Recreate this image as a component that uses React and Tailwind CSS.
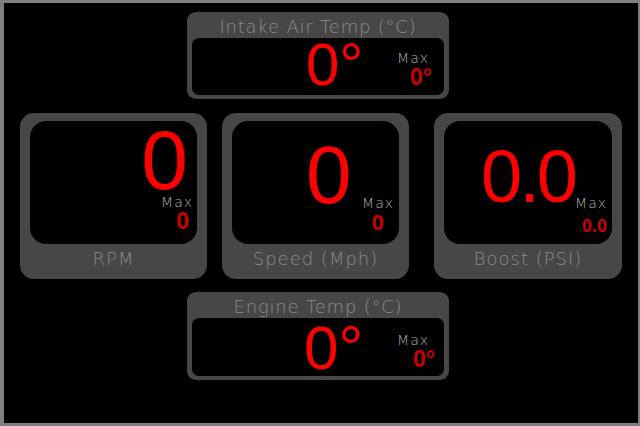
import React from "react";

const T = "font-['DejaVu_Sans',sans-serif] font-extralight";
const N = "font-['Liberation_Sans',sans-serif]";

function Max({ className = "" }) {
  return (
    <div className={`${T} text-[14px] leading-[10px] tracking-[1px] text-[#b0b0b0] ${className}`}>Max</div>
  );
}

function Val({ children, className = "" }) {
  return (
    <div className={`${N} font-bold text-[#cc0000] ${className}`}>{children}</div>
  );
}

function WideCard({ title, children, panelH }) {
  return (
    <div className="ml-[183px] w-[262px] rounded-[9px] bg-[#474747] px-[5px] pb-[4px] flex flex-col">
      <div className={`${T} text-center text-[18px] leading-[13px] tracking-[0.8px] text-[#8c8c8c] mt-[8px] mb-[5px]`}>{title}</div>
      <div className={`${panelH} rounded-[7px] bg-black flex`}>{children}</div>
    </div>
  );
}

function Gauge({ label, children, w = "w-[187px]", className = "" }) {
  return (
    <div className={`${w} h-[166px] rounded-[14px] bg-[#474747] px-[10px] pt-[8px] flex flex-col ${className}`}>
      <div className="h-[123px] rounded-[16px] bg-black flex">{children}</div>
      <div className={`${T} text-center text-[18px] leading-[13px] tracking-[1px] text-[#8c8c8c] mt-[8px]`}>{label}</div>
    </div>
  );
}

export default function App() {
  return (
    <div className="w-[640px] h-[426px] bg-black border-l-[4px] border-t-[3px] border-r-[2px] border-b-[3px] border-[#7f7f7f] flex flex-col pt-[9px] overflow-hidden">
      <WideCard title="Intake Air Temp (°C)" panelH="h-[57px]">
        <div className={`${N} text-[60px] leading-[43px] text-[#ff0000] ml-[114px] mt-[5px]`}>0°</div>
        <div className="ml-auto mr-[12px] flex flex-col items-end">
          <Max className="mt-[15px] mr-[3px]" />
          <Val className="text-[23px] leading-[17px] mt-[6px]">0°</Val>
        </div>
      </WideCard>

      <div className="flex mt-[14px] ml-[16px]">
        <Gauge label="RPM">
          <div className="flex flex-col items-end w-full">
            <div className={`${N} text-[84px] leading-[60px] text-[#ff0000] mt-[9px] mr-[9px]`}>0</div>
            <Max className="mt-[7px] mr-[4px]" />
            <Val className="text-[23px] leading-[17px] mt-[6px] mr-[8px]">0</Val>
          </div>
        </Gauge>
        <Gauge label="Speed (Mph)" className="ml-[15px]">
          <div className={`${N} text-[82px] leading-[59px] text-[#ff0000] ml-[74px] mt-[24px]`}>0</div>
          <div className="ml-auto mr-[5px] flex flex-col items-end">
            <Max className="mt-[77px]" />
            <Val className="text-[22px] leading-[16px] mt-[7px] mr-[10px]">0</Val>
          </div>
        </Gauge>
        <Gauge label="Boost (PSI)" w="w-[188px]" className="ml-[25px]">
          <div className={`${N} text-[74px] leading-[53px] tracking-[-3px] text-[#ff0000] ml-[37px] mt-[29px]`}>0.0</div>
          <div className="ml-auto mr-[5px] flex flex-col items-end">
            <Max className="mt-[77px]" />
            <Val className="text-[18px] leading-[13px] mt-[12px]">0.0</Val>
          </div>
        </Gauge>
      </div>

      <div className="mt-[13px]">
        <WideCard title="Engine Temp (°C)" panelH="h-[58px]">
          <div className={`${N} text-[62px] leading-[45px] text-[#ff0000] ml-[112px] mt-[7px]`}>0°</div>
          <div className="ml-auto mr-[9px] flex flex-col items-end">
            <Max className="mt-[17px] mr-[6px]" />
            <Val className="text-[23px] leading-[17px] mt-[6px]">0°</Val>
          </div>
        </WideCard>
      </div>
    </div>
  );
}
